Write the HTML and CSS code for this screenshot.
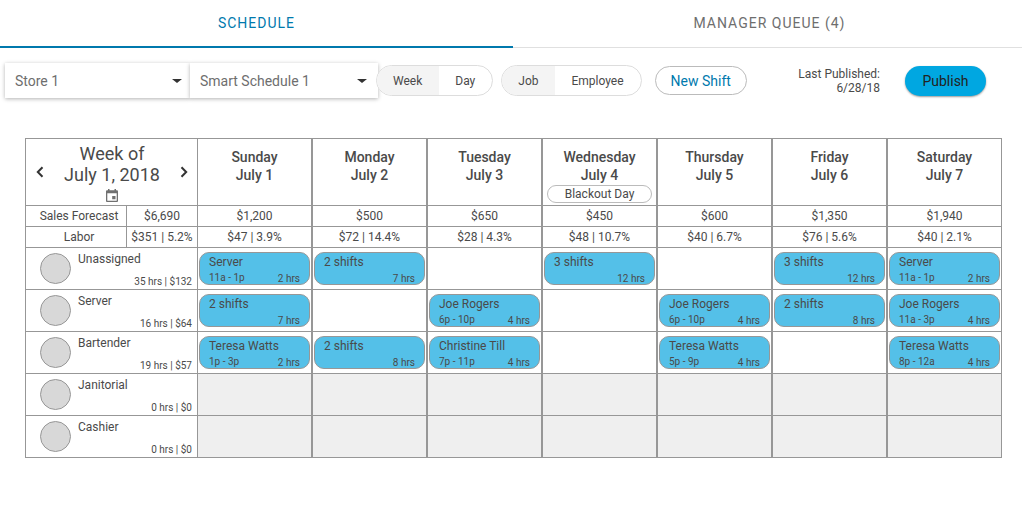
FILE: index.html
```html
<!DOCTYPE html>
<html lang="en">
<head>
<meta charset="utf-8">
<meta name="viewport" content="width=device-width, initial-scale=1">
<title>Schedule</title>
<link rel="stylesheet" href="styles.css">
</head>
<body>
<nav class="tabs" aria-label="Sections">
  <a class="tab tab-active" href="#schedule" aria-current="page">SCHEDULE</a>
  <a class="tab" href="#queue">MANAGER QUEUE (4)</a>
</nav>
<main>
<div class="toolbar">
  <div class="picker picker-store">
    <select class="picker-select" aria-label="Store"><option>Store 1</option></select>
    <span class="picker-arrow"></span>
  </div>
  <div class="picker picker-plan">
    <select class="picker-select" aria-label="Schedule"><option>Smart Schedule 1</option></select>
    <span class="picker-arrow"></span>
  </div>
  <div class="toggle" role="group" aria-label="Range">
    <button class="toggle-item toggle-on" type="button" aria-pressed="true">Week</button>
    <button class="toggle-item" type="button" aria-pressed="false">Day</button>
  </div>
  <div class="toggle toggle-view" role="group" aria-label="Group by">
    <button class="toggle-item toggle-on" type="button" aria-pressed="true">Job</button>
    <button class="toggle-item" type="button" aria-pressed="false">Employee</button>
  </div>
  <button class="new-shift" type="button">New Shift</button>
  <p class="published">Last Published:<br>6/28/18</p>
  <button class="publish" type="button">Publish</button>
</div>

<table class="schedule" id="schedule">
  <colgroup><col class="col-job"><col class="col-total"><col><col><col><col><col><col><col></colgroup>
  <thead>
    <tr class="head-row">
      <td class="week" colspan="2">
        <div class="week-nav">
          <button class="icon-button" type="button" aria-label="Previous week"><svg class="chevron" viewBox="0 0 8 12"><path d="M6.5 1.2 1.8 6l4.7 4.8"/></svg></button>
          <div class="week-title">
            <span>Week of</span>
            <span>July 1, 2018</span>
            <button class="icon-button" type="button" aria-label="Pick a date"><svg class="calendar" viewBox="0 0 12 13"><path fill-rule="evenodd" d="M2 0h1.5v1.2h5V0H10v1.2h.8c.7 0 1.200.5 1.200 1.200v9.300c0 .7-.5 1.300-1.200 1.300H1.200C.5 13 0 12.400 0 11.700V2.400c0-.7.5-1.200 1.200-1.200H2zM1.300 4.300v7.400h9.400V4.300zM6.200 7h3.300v3.300H6.200z"/></svg></button>
          </div>
          <button class="icon-button" type="button" aria-label="Next week"><svg class="chevron" viewBox="0 0 8 12"><path d="M1.500 1.200 6.200 6l-4.700 4.800"/></svg></button>
        </div>
      </td>
      <th class="day" scope="col">Sunday<br>July 1</th>
      <th class="day" scope="col">Monday<br>July 2</th>
      <th class="day" scope="col">Tuesday<br>July 3</th>
      <th class="day" scope="col">Wednesday<br>July 4<span class="blackout">Blackout Day</span></th>
      <th class="day" scope="col">Thursday<br>July 5</th>
      <th class="day" scope="col">Friday<br>July 6</th>
      <th class="day" scope="col">Saturday<br>July 7</th>
    </tr>
  </thead>
  <tbody>
    <tr class="sum-row"><th class="sum-label" scope="row">Sales Forecast</th><td class="sum-label">$6,690</td><td>$1,200</td><td>$500</td><td>$650</td><td>$450</td><td>$600</td><td>$1,350</td><td>$1,940</td></tr>
    <tr class="sum-row"><th class="sum-label" scope="row">Labor</th><td class="sum-label">$351 | 5.2%</td><td>$47 | 3.9%</td><td>$72 | 14.4%</td><td>$28 | 4.3%</td><td>$48 | 10.7%</td><td>$40 | 6.7%</td><td>$76 | 5.6%</td><td>$40 | 2.1%</td></tr>
    <tr class="job-row">
      <th class="job" colspan="2" scope="row"><div class="job-box"><span class="avatar"></span><span class="job-name">Unassigned</span><span class="job-total">35 hrs | $132</span></div></th>
      <td><button class="shift" type="button"><span class="shift-name">Server</span><span class="shift-time">11a - 1p</span><span class="shift-hours">2 hrs</span></button></td>
      <td><button class="shift" type="button"><span class="shift-name">2 shifts</span><span class="shift-hours">7 hrs</span></button></td>
      <td></td>
      <td><button class="shift" type="button"><span class="shift-name">3 shifts</span><span class="shift-hours">12 hrs</span></button></td>
      <td></td>
      <td><button class="shift" type="button"><span class="shift-name">3 shifts</span><span class="shift-hours">12 hrs</span></button></td>
      <td><button class="shift" type="button"><span class="shift-name">Server</span><span class="shift-time">11a - 1p</span><span class="shift-hours">2 hrs</span></button></td>
    </tr>
    <tr class="job-row">
      <th class="job" colspan="2" scope="row"><div class="job-box"><span class="avatar"></span><span class="job-name">Server</span><span class="job-total">16 hrs | $64</span></div></th>
      <td><button class="shift" type="button"><span class="shift-name">2 shifts</span><span class="shift-hours">7 hrs</span></button></td>
      <td></td>
      <td><button class="shift" type="button"><span class="shift-name">Joe Rogers</span><span class="shift-time">6p - 10p</span><span class="shift-hours">4 hrs</span></button></td>
      <td></td>
      <td><button class="shift" type="button"><span class="shift-name">Joe Rogers</span><span class="shift-time">6p - 10p</span><span class="shift-hours">4 hrs</span></button></td>
      <td><button class="shift" type="button"><span class="shift-name">2 shifts</span><span class="shift-hours">8 hrs</span></button></td>
      <td><button class="shift" type="button"><span class="shift-name">Joe Rogers</span><span class="shift-time">11a - 3p</span><span class="shift-hours">4 hrs</span></button></td>
    </tr>
    <tr class="job-row">
      <th class="job" colspan="2" scope="row"><div class="job-box"><span class="avatar"></span><span class="job-name">Bartender</span><span class="job-total">19 hrs | $57</span></div></th>
      <td><button class="shift" type="button"><span class="shift-name">Teresa Watts</span><span class="shift-time">1p - 3p</span><span class="shift-hours">2 hrs</span></button></td>
      <td><button class="shift" type="button"><span class="shift-name">2 shifts</span><span class="shift-hours">8 hrs</span></button></td>
      <td><button class="shift" type="button"><span class="shift-name">Christine Till</span><span class="shift-time">7p - 11p</span><span class="shift-hours">4 hrs</span></button></td>
      <td></td>
      <td><button class="shift" type="button"><span class="shift-name">Teresa Watts</span><span class="shift-time">5p - 9p</span><span class="shift-hours">4 hrs</span></button></td>
      <td></td>
      <td><button class="shift" type="button"><span class="shift-name">Teresa Watts</span><span class="shift-time">8p - 12a</span><span class="shift-hours">4 hrs</span></button></td>
    </tr>
    <tr class="job-row job-closed">
      <th class="job" colspan="2" scope="row"><div class="job-box"><span class="avatar"></span><span class="job-name">Janitorial</span><span class="job-total">0 hrs | $0</span></div></th>
      <td></td><td></td><td></td><td></td><td></td><td></td><td></td>
    </tr>
    <tr class="job-row job-closed">
      <th class="job" colspan="2" scope="row"><div class="job-box"><span class="avatar"></span><span class="job-name">Cashier</span><span class="job-total">0 hrs | $0</span></div></th>
      <td></td><td></td><td></td><td></td><td></td><td></td><td></td>
    </tr>
  </tbody>
</table>
</main>
</body>
</html>
```

FILE: styles.css
```css
* { box-sizing: border-box; }

body {
  margin: 0;
  background: #fff;
  color: #4a4a4a;
  font-family: Roboto, sans-serif;
  font-size: 12px;
  overflow-x: hidden;
}

button, select {
  font: inherit;
  color: inherit;
  margin: 0;
  cursor: pointer;
}

/* Tabs */
.tabs {
  display: flex;
  width: calc(100% + 4px);
  height: 48px;
}

.tab {
  flex: 1;
  border-bottom: 1px solid #e0e0e0;
  color: #6e6e6e;
  font-size: 14px;
  line-height: 47px;
  letter-spacing: 1px;
  text-align: center;
  text-decoration: none;
}

.tab-active {
  border-bottom: 2px solid #0079ad;
  color: #0079ad;
}

/* Toolbar */
.toolbar {
  display: flex;
  align-items: center;
  height: 35px;
  margin: 15px 36px 40px 5px;
}

.picker {
  display: flex;
  align-items: center;
  height: 35px;
  background: #fff;
  box-shadow: 0 1px 4px rgba(0, 0, 0, 0.3);
}

.picker-store { width: 185px; }
.picker-plan { width: 188px; }

.picker-select {
  flex: 1;
  min-width: 0;
  height: 35px;
  padding: 0 10px;
  border: 0;
  background: none;
  color: #6e6e6e;
  font-size: 14px;
  appearance: none;
}

.picker-arrow {
  margin-right: 8px;
  border: solid transparent;
  border-width: 4px 5px 0;
  border-top-color: #333;
}

.picker-plan .picker-arrow { margin-right: 11px; }

.toggle {
  display: flex;
  height: 31px;
  margin-left: -2px;
  border: 1px solid #ddd;
  border-radius: 16px;
  background: #fff;
  overflow: hidden;
}

.toggle-view { margin-left: 8px; }

.toggle-item {
  padding: 0 17px 0 16px;
  border: 0;
  background: none;
}

.toggle-on { background: #f4f4f4; }

.new-shift {
  height: 29px;
  margin-left: 13px;
  padding: 0 15px;
  border: 1px solid #bbb;
  border-radius: 15px;
  background: #fff;
  color: #0079ad;
  font-size: 14px;
}

.published {
  margin: 0 25px 0 auto;
  line-height: 14px;
  text-align: right;
}

.publish {
  min-width: 81px;
  height: 30px;
  padding: 0 17px;
  border: 0;
  border-radius: 15px;
  background: #00a7e1;
  box-shadow: 0 1px 2px rgba(0, 0, 0, 0.4);
  color: #222;
  font-size: 14px;
}

/* Schedule grid */
.schedule {
  width: calc(100% - 45px);
  margin: 0 20px 40px 25px;
  border-collapse: separate;
  border-spacing: 0;
  border-bottom: 1px solid #979797;
  table-layout: fixed;
}

.col-job { width: 101px; }
.col-total { width: 71px; }

.schedule th,
.schedule td {
  padding: 0;
  border: 1px solid #979797;
  border-bottom: 0;
  font-weight: 400;
  text-align: center;
}

.schedule .week,
.schedule .job,
.schedule .sum-label { border-right: 0; }

.head-row { height: 67px; }
.sum-row { height: 21px; line-height: 20px; }
.job-row { height: 42px; }

.schedule .sum-row th { padding-left: 6px; }

.week-nav {
  display: flex;
  align-items: center;
  justify-content: space-between;
  padding: 0 9px 0 10px;
}

.week-title {
  display: flex;
  flex-direction: column;
  align-items: center;
  font-size: 18px;
  line-height: 21px;
}

.icon-button {
  display: flex;
  padding: 0;
  border: 0;
  background: none;
}

.chevron {
  width: 8px;
  height: 12px;
  fill: none;
  stroke: #333;
  stroke-width: 2;
}

.calendar {
  width: 12px;
  height: 13px;
  margin-top: 4px;
  fill: #707070;
}

.schedule .day {
  padding-top: 9px;
  font-size: 14px;
  font-weight: 500;
  line-height: 18px;
  vertical-align: top;
}

.blackout {
  display: block;
  height: 18px;
  margin: 1px 4px 0;
  border: 1px solid #bbb;
  border-radius: 9px;
  font-size: 12px;
  font-weight: 400;
  line-height: 16px;
}

.job-box {
  display: grid;
  grid-template-columns: 31px 1fr;
  column-gap: 7px;
  height: 41px;
  padding: 4px 5px 1px 14px;
  text-align: left;
}

.avatar {
  grid-row: 1 / 3;
  width: 31px;
  height: 31px;
  margin-top: 1px;
  border: 1px solid #979797;
  border-radius: 50%;
  background: #d8d8d8;
}

.job-name { line-height: 14px; }

.job-total {
  align-self: end;
  font-size: 10px;
  line-height: 12px;
  text-align: right;
}

.schedule .job-row td {
  padding: 4px 1px 0;
  vertical-align: top;
}

.schedule .job-closed td { background: #efefef; }

.shift {
  display: grid;
  grid-template-columns: auto auto;
  grid-template-rows: 17px 14px;
  width: 100%;
  height: 33px;
  padding: 0 9px;
  border: 1px solid #979797;
  border-radius: 10px;
  background: #54c0e8;
  text-align: left;
}

.shift-name {
  grid-column: 1 / 3;
  line-height: 18px;
}

.shift-time {
  font-size: 10px;
  line-height: 16px;
}

.shift-hours {
  grid-column: 2;
  font-size: 10px;
  line-height: 18px;
  text-align: right;
}
```
